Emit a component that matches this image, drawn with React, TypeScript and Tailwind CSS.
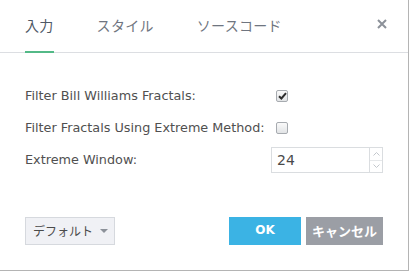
import React, { useState } from 'react';

const tabs = ['入力', 'スタイル', 'ソースコード'];

export default function App() {
  const [active, setActive] = useState(0);
  const [filterBW, setFilterBW] = useState(true);
  const [filterExt, setFilterExt] = useState(false);
  const [win, setWin] = useState('24');

  return (
    <div
      className="w-[409px] h-[271px] bg-white border-r border-b border-[#b4b4b4] flex flex-col text-[#505050]"
      style={{ fontFamily: '"DejaVu Sans", "Noto Sans CJK JP", sans-serif' }}
    >
      {/* header tabs */}
      <div className="h-[53px] border-b border-[#dcdee2] flex items-start pl-[25px] pr-[19px] shrink-0">
        <div className="flex gap-[43px] h-full">
          {tabs.map((t, i) => (
            <div
              key={t}
              onClick={() => setActive(i)}
              className={`relative h-full pt-[16px] text-[14px] leading-[18px] tracking-[0.3px] cursor-pointer ${
                active === i ? 'text-[#4f5966]' : 'text-[#6f7580]'
              }`}
              style={{ fontFamily: '"Noto Sans CJK JP", sans-serif' }}
            >
              {t}
              {active === i && (
                <span className="absolute left-0 right-0 bottom-[-1px] h-[2px] bg-[#53b987]" />
              )}
            </div>
          ))}
        </div>
        <button className="ml-auto mt-[17px] w-[14px] h-[14px] flex items-center justify-center text-[#8c9199]">
          <svg width="10" height="10" viewBox="0 0 10 10">
            <path d="M1 1 L9 9 M9 1 L1 9" stroke="currentColor" strokeWidth="2" />
          </svg>
        </button>
      </div>

      {/* inputs */}
      <div className="flex flex-col pl-[25px] pt-[30px]">
        <div className="flex items-center h-[26px]">
          <span className="w-[251px] text-[12.8px]">Filter Bill Williams Fractals:</span>
          <Check checked={filterBW} onClick={() => setFilterBW(!filterBW)} />
        </div>
        <div className="flex items-center h-[26px] mt-[6px]">
          <span className="w-[251px] text-[12.8px]">Filter Fractals Using Extreme Method:</span>
          <Check checked={filterExt} onClick={() => setFilterExt(!filterExt)} />
        </div>
        <div className="flex items-center h-[26px] mt-[6px]">
          <span className="w-[246px] text-[12.8px]">Extreme Window:</span>
          <div className="w-[112px] h-[26px] border border-[#dadde0] flex">
            <input
              value={win}
              onChange={(e) => setWin(e.target.value)}
              className="flex-1 min-w-0 pl-[5px] text-[14px] text-[#4a4a4a] outline-none"
            />
            <div className="w-[13px] border-l border-[#dadde0] flex flex-col">
              <div className="flex-1 flex items-center justify-center border-b border-[#e6e8ea] text-[#c3c7cc]">
                <svg width="7" height="4" viewBox="0 0 7 4">
                  <path d="M0.5 3.5 L3.5 0.5 L6.5 3.5" stroke="currentColor" fill="none" />
                </svg>
              </div>
              <div className="flex-1 flex items-center justify-center text-[#c3c7cc]">
                <svg width="7" height="4" viewBox="0 0 7 4">
                  <path d="M0.5 0.5 L3.5 3.5 L6.5 0.5" stroke="currentColor" fill="none" />
                </svg>
              </div>
            </div>
          </div>
        </div>
      </div>

      {/* footer */}
      <div
        className="mt-auto mb-[25px] flex items-center pl-[25px] pr-[25px]"
        style={{ fontFamily: '"Noto Sans CJK JP", sans-serif' }}
      >
        <button className="w-[90px] h-[28px] bg-[#f0f1f5] border border-[#d6d9de] flex items-center justify-center gap-[7px] pl-[1px] text-[12px] text-[#4a4a4a]">
          デフォルト
          <svg width="8" height="4" viewBox="0 0 8 4">
            <path d="M0 0 H8 L4 4 Z" fill="#8c9199" />
          </svg>
        </button>
        <div className="ml-auto flex gap-[5px]">
          <button
            className="w-[72px] h-[28px] bg-[#3bb3e4] text-white text-[12px] font-bold pb-[2px]"
            style={{ fontFamily: '"DejaVu Sans", sans-serif' }}
          >
            OK
          </button>
          <button className="w-[77px] h-[28px] bg-[#9b9ea5] text-white text-[13px] font-bold">キャンセル</button>
        </div>
      </div>
    </div>
  );
}

function Check({ checked, onClick }: { checked: boolean; onClick: () => void }) {
  return (
    <button
      onClick={onClick}
      className="w-[12px] h-[12px] rounded-[2px] border border-[#a7abb0] bg-gradient-to-b from-[#fafafa] to-[#e2e4e6] flex items-center justify-center"
    >
      {checked && (
        <svg width="9" height="8" viewBox="0 0 9 8">
          <path d="M1 4.2 L3.4 6.5 L8 1.2" stroke="#2e2e2e" strokeWidth="2" fill="none" />
        </svg>
      )}
    </button>
  );
}
